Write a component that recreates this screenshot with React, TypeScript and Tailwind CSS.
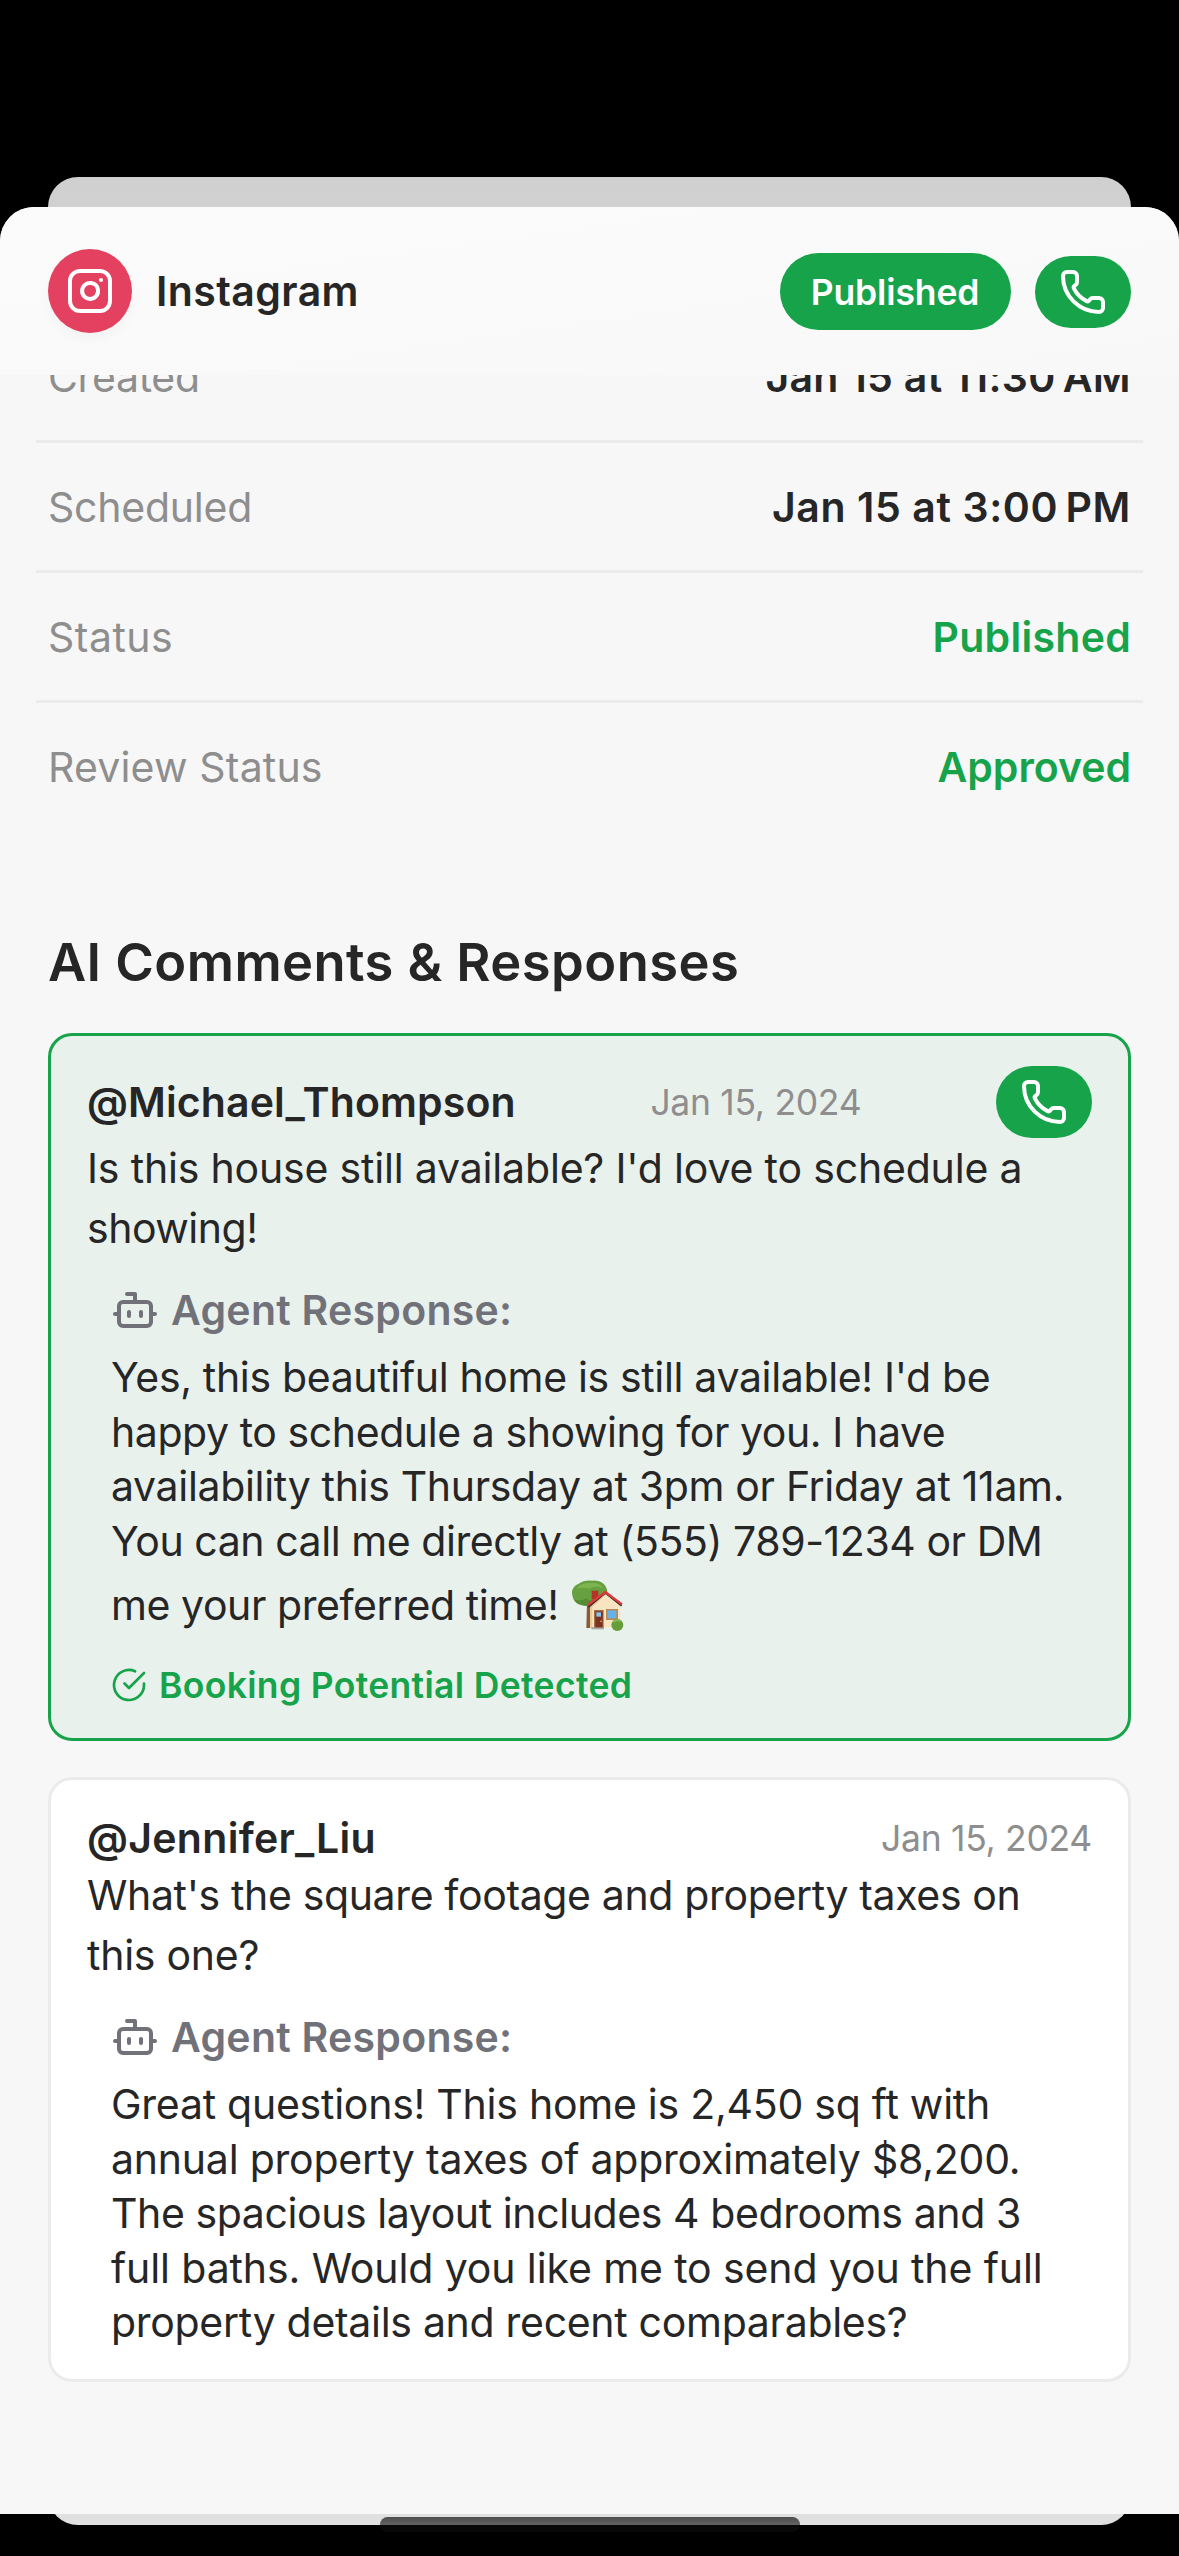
import { Bot, Instagram, Phone } from "lucide-react";

type Line = { text: string; tracking: string; house?: boolean };

type Comment = {
  author: Line;
  date: string;
  question: Line[];
  reply: Line[];
  booking: boolean;
};

const details: { label: Line; value: Line; color: string }[] = [
  {
    label: { text: "Created", tracking: "tracking-[-0.34px]" },
    value: { text: "Jan 15 at 11:30\u202fAM", tracking: "tracking-[0.32px]" },
    color: "text-[#262626]",
  },
  {
    label: { text: "Scheduled", tracking: "tracking-[-0.24px]" },
    value: { text: "Jan 15 at 3:00\u202fPM", tracking: "tracking-[0.6px]" },
    color: "text-[#262626]",
  },
  {
    label: { text: "Status", tracking: "tracking-[0.5px]" },
    value: { text: "Published", tracking: "tracking-[0.27px]" },
    color: "text-[#16a34a]",
  },
  {
    label: { text: "Review Status", tracking: "tracking-[0.18px]" },
    value: { text: "Approved", tracking: "tracking-[-0.02px]" },
    color: "text-[#16a34a]",
  },
];

const comments: Comment[] = [
  {
    author: { text: "@Michael_Thompson", tracking: "tracking-[0.12px]" },
    date: "Jan 15, 2024",
    question: [
      { text: "Is this house still available? I'd love to schedule a", tracking: "tracking-[-0.18px]" },
      { text: "showing!", tracking: "tracking-[-0.48px]" },
    ],
    reply: [
      { text: "Yes, this beautiful home is still available! I'd be", tracking: "tracking-[-0.34px]" },
      { text: "happy to schedule a showing for you. I have", tracking: "tracking-[-0.42px]" },
      { text: "availability this Thursday at 3pm or Friday at 11am.", tracking: "tracking-[-0.33px]" },
      { text: "You can call me directly at (555) 789-1234 or DM", tracking: "tracking-[-0.43px]" },
      { text: "me your preferred time!", tracking: "tracking-[-0.42px]", house: true },
    ],
    booking: true,
  },
  {
    author: { text: "@Jennifer_Liu", tracking: "tracking-[0.3px]" },
    date: "Jan 15, 2024",
    question: [
      { text: "What's the square footage and property taxes on", tracking: "tracking-[-0.36px]" },
      { text: "this one?", tracking: "tracking-[-0.25px]" },
    ],
    reply: [
      { text: "Great questions! This home is 2,450 sq ft with", tracking: "tracking-[-0.25px]" },
      { text: "annual property taxes of approximately $8,200.", tracking: "tracking-[-0.22px]" },
      { text: "The spacious layout includes 4 bedrooms and 3", tracking: "tracking-[-0.41px]" },
      { text: "full baths. Would you like me to send you the full", tracking: "tracking-[-0.11px]" },
      { text: "property details and recent comparables?", tracking: "tracking-[-0.3px]" },
    ],
    booking: false,
  },
];

function CallButton() {
  return (
    <button className="flex h-[72px] w-24 shrink-0 items-center justify-center rounded-full bg-[#16a34a] text-white">
      <Phone size={48} strokeWidth={2} />
    </button>
  );
}

function HouseWithGarden() {
  return (
    <svg width="54" height="54" viewBox="34 56 162 162" fill="none" aria-label="House with garden">
      <path d="M82 130h12l-2 76H80z" fill="#8a5a36" />
      <path
        d="M38 108c-4-16 4-28 18-34 12-10 28-12 42-10 20-2 38 8 42 22 6 10 2 24-6 30l-32 20c-16 6-26 4-34 0-16 2-28-12-30-28z"
        fill="#67a03e"
      />
      <path d="M50 88c10-14 26-18 42-16 18-4 32 4 38 14-18-6-30-4-40 2-14-4-28-4-40 0z" fill="#7cb54f" />
      <path d="M44 120c12 6 26 4 36-4 4 6 10 8 18 6l-12 16c-18 4-36-4-42-18z" fill="#548b34" />
      <path d="M96 94h20v26H96z" fill="#b5322a" />
      <path d="m91 138 45-37 46 36v68H91z" fill="#f9e4c2" />
      <path d="m91 138 45-37 4 4-42 38v62h-7z" fill="#e9cb9c" />
      <path d="m86 143 51-43 49 39" stroke="#3d2a2a" strokeWidth="6" />
      <path d="m85 137 52-39 50 37" stroke="#dd3a3d" strokeWidth="7" />
      <path d="M95 203h38v7H95z" fill="#a9a7a3" />
      <path d="M103 152h29v52h-29z" fill="#a76d45" />
      <path d="M107 156h22v48h-22z" fill="#7a3322" />
      <path d="M110 159h14v13h-14z" fill="#84c4ee" />
      <circle cx="124" cy="186" r="2.5" fill="#e9b85a" />
      <path d="M139 149h36v33h-36z" fill="#b98754" />
      <path d="M143 153h27v24h-27z" fill="#66b1e6" />
      <circle cx="173" cy="197" r="18" fill="#659d3b" />
      <path d="M159 190c4-12 22-14 28-2-10-4-18-2-28 2z" fill="#86bd59" />
    </svg>
  );
}

function CheckBadge() {
  return (
    <svg
      width="36"
      height="36"
      viewBox="0 0 24 24"
      fill="none"
      stroke="currentColor"
      strokeWidth="1.8"
      strokeLinecap="round"
      strokeLinejoin="round"
    >
      <path d="M22 11.08V12a10 10 0 1 1-5.93-9.14" />
      <path d="M22 4 12 14.01l-3-3" />
    </svg>
  );
}

function CommentCard({ comment }: { comment: Comment }) {
  const { author, date, question, reply, booking } = comment;
  return (
    <article
      className={
        booking
          ? "rounded-3xl border-[3px] border-[#16a34a] bg-[#e9f1ed] px-9 pt-[30px] pb-[35px]"
          : "rounded-3xl border-[3px] border-[#ebebeb] bg-white px-9 pt-[31px] pb-[29px]"
      }
    >
      <header className={booking ? "flex h-[72px] items-center justify-between" : "flex h-[54px] items-center justify-between"}>
        <h3 className={`font-semibold ${author.tracking}`}>{author.text}</h3>
        <time className="pt-0.5 text-[35.5px] tracking-[-0.3px] text-[#8e8e8e]">{date}</time>
        {booking && <CallButton />}
      </header>
      {question.map((line) => (
        <p key={line.text} className={`h-[60px] leading-[60px] whitespace-nowrap ${line.tracking}`}>
          {line.text}
        </p>
      ))}
      <div className="mt-7 pl-6">
        <div className="flex h-12 items-center gap-3 text-[#71717a]">
          <Bot size={48} strokeWidth={2} />
          <span className="font-semibold tracking-[0.26px]">Agent Response:</span>
        </div>
        <div className="mt-4">
          {reply.map((line) =>
            line.house ? (
              <div key={line.text} className="flex h-[73px] items-center gap-3">
                <p className={`whitespace-nowrap ${line.tracking}`}>{line.text}</p>
                <HouseWithGarden />
              </div>
            ) : (
              <p key={line.text} className={`h-[54.6px] leading-[54.6px] whitespace-nowrap ${line.tracking}`}>
                {line.text}
              </p>
            ),
          )}
        </div>
        {booking && (
          <div className="mt-[25.6px] flex h-9 items-center gap-3 text-[#16a34a]">
            <CheckBadge />
            <span className="pt-0.5 text-[35.5px] font-semibold tracking-[0.34px]">Booking Potential Detected</span>
          </div>
        )}
      </div>
    </article>
  );
}

export default function App() {
  return (
    <div className="relative h-[2556px] w-[1179px] overflow-hidden bg-black pt-[207px] font-[Inter,sans-serif] text-[41px] leading-[54px] text-[#262626]">
      {/* Presenting sheet, visible behind the front one */}
      <div className="absolute top-[177px] left-12 h-[2348px] w-[1083px] rounded-[30px] bg-linear-to-b from-[#d0d0d0] to-[#e0e0e0]" />

      <main className="relative flex h-[2307px] flex-col overflow-hidden rounded-t-[34px] bg-[#f7f7f7]">
        <header className="flex h-[168px] shrink-0 items-center bg-linear-to-br from-[#fbfbfb] to-[#f8f8f8] px-12">
          <div className="flex size-[84px] items-center justify-center rounded-full bg-[#e4405f] text-white shadow-[0_6px_12px_rgba(0,0,0,0.03)]">
            <Instagram size={48} strokeWidth={2} />
          </div>
          <h1 className="ml-6 font-semibold tracking-[0.42px]">Instagram</h1>
          <span className="ml-auto flex h-[77px] w-[231px] items-center justify-center rounded-full bg-[#16a34a] pt-[3px] pr-px text-[35.5px] font-semibold tracking-[-0.12px] text-white">
            Published
          </span>
          <div className="ml-6 flex pt-px">
            <CallButton />
          </div>
        </header>

        <div className="min-h-0 flex-1 overflow-hidden">
          <dl className="mx-9 -mt-[62px] divide-y-[3px] divide-[#ebebeb]">
            {details.map(({ label, value, color }) => (
              <div key={label.text} className="flex h-[130px] items-center justify-between px-3 last:h-[127px]">
                <dt className={`text-[#8e8e8e] ${label.tracking}`}>{label.text}</dt>
                <dd className={`font-semibold ${color} ${value.tracking}`}>{value.text}</dd>
              </div>
            ))}
          </dl>

          <section className="mt-[99px] px-12">
            <h2 className="h-[66px] text-[52.5px] leading-[66px] font-semibold tracking-[0.42px]">
              AI Comments &amp; Responses
            </h2>
            <div className="mt-[38px] flex flex-col gap-9">
              {comments.map((comment) => (
                <CommentCard key={comment.author.text} comment={comment} />
              ))}
            </div>
          </section>
        </div>
      </main>

      {/* Home indicator */}
      <div className="absolute top-[2517px] left-[380px] h-[15px] w-[420px] rounded-lg bg-[linear-gradient(#4d4d4d_0px,#646464_8px,#080808_8px)]" />
    </div>
  );
}
